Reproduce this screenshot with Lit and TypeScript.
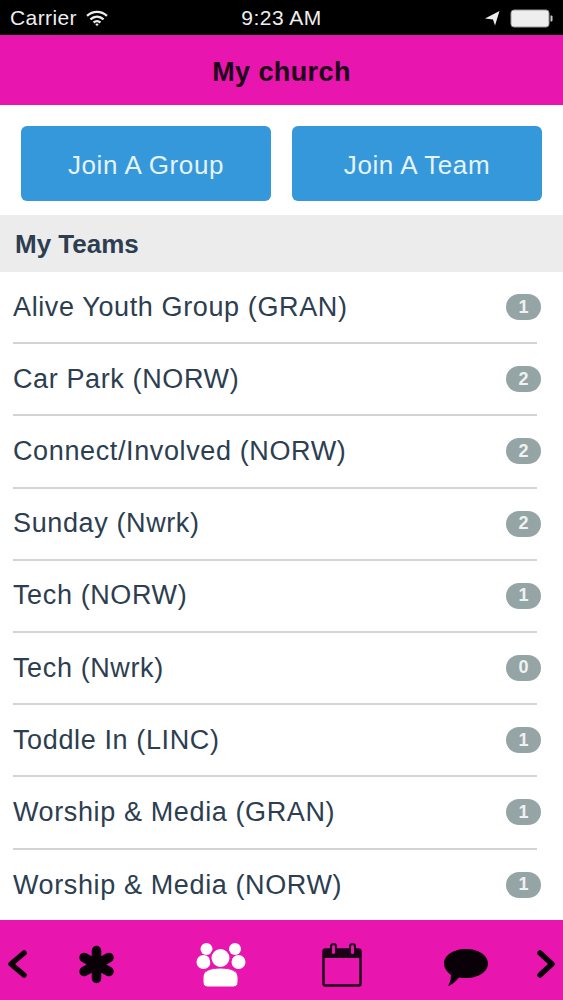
import { LitElement, html, css, svg } from "lit";
import { customElement } from "lit/decorators.js";

const teams: [string, number][] = [
  ["Alive Youth Group (GRAN)", 1],
  ["Car Park (NORW)", 2],
  ["Connect/Involved (NORW)", 2],
  ["Sunday (Nwrk)", 2],
  ["Tech (NORW)", 1],
  ["Tech (Nwrk)", 0],
  ["Toddle In (LINC)", 1],
  ["Worship & Media (GRAN)", 1],
  ["Worship & Media (NORW)", 1],
];

@customElement("app-root")
export class AppRoot extends LitElement {
  static styles = css`
    :host {
      display: flex;
      flex-direction: column;
      width: 563px;
      height: 1000px;
      overflow: hidden;
      background: #fff;
      font-family: "Liberation Sans", Arial, sans-serif;
      color: #2c3e50;
    }
    .status {
      flex: none;
      height: 35px;
      background: #000;
      color: #eee;
      display: grid;
      grid-template-columns: 1fr auto 1fr;
      align-items: center;
      font-size: 21px;
      padding: 1px 10px 0 10px;
      box-sizing: border-box;
    }
    .status .left { display: flex; align-items: center; gap: 9px; }
    .carrier { letter-spacing: 0.4px; }
    .status .right { display: flex; align-items: center; justify-content: flex-end; gap: 10px; }
    .time { letter-spacing: 0.5px; }
    .nav {
      flex: none;
      height: 70px;
      box-sizing: border-box;
      padding-top: 4px;
      background: #e815ae;
      color: #1c0018;
      display: flex;
      align-items: center;
      justify-content: center;
      font-weight: 700;
      font-size: 27px;
      letter-spacing: 0.4px;
    }
    .buttons {
      flex: none;
      height: 110px;
      box-sizing: border-box;
      padding: 21px 21px 14px;
      display: grid;
      grid-template-columns: 250px 250px;
      column-gap: 21px;
    }
    .btn {
      background: #3498db;
      color: #e6f3fb;
      border-radius: 6px;
      display: flex;
      align-items: center;
      justify-content: center;
      font-size: 26px;
      letter-spacing: 0.6px;
      box-sizing: border-box;
      padding-top: 3px;
    }
    .section {
      flex: none;
      height: 57px;
      box-sizing: border-box;
      padding-top: 2px;
      background: #ececec;
      display: flex;
      align-items: center;
      padding-left: 15px;
      font-weight: 700;
      font-size: 26px;
    }
    .list {
      flex: 1;
      min-height: 0;
      overflow: hidden;
      display: flex;
      flex-direction: column;
    }
    .row {
      flex: none;
      height: 72.2px;
      margin-left: 13px;
      margin-right: 26px;
      box-sizing: border-box;
      border-bottom: 2px solid #d4d4d4;
      position: relative;
      display: flex;
      align-items: center;
      font-size: 27px;
      letter-spacing: 0.62px;
    }
    .row:last-child { border-bottom: none; }
    .badge {
      position: absolute;
      right: -4px;
      top: 22px;
      width: 35px;
      height: 26px;
      border-radius: 13px;
      background: #95a5a6;
      color: #eef2f2;
      font-size: 18px;
      font-weight: 700;
      letter-spacing: 0;
      display: flex;
      align-items: center;
      justify-content: center;
    }
    .tabs {
      flex: none;
      height: 80px;
      background: #e815ae;
      position: relative;
    }
    .tabs svg { position: absolute; left: 0; top: 0; }
  `;

  render() {
    return html`
      <div class="status">
        <div class="left">
          <span class="carrier">Carrier</span>
          <svg width="22" height="17" viewBox="0 0 21 16">
            <path d="M1 5.500C6.500 .5 14.500 .5 20 5.500M4.200 8.800C8 5.500 13 5.500 16.800 8.800M7.200 11.800C9.200 10.200 11.800 10.200 13.800 11.800" fill="none" stroke="#eee" stroke-width="2.200"/>
            <path d="M8.800 13.200L10.500 15.500L12.200 13.200C11.200 12.500 9.800 12.500 8.800 13.200Z" fill="#eee"/>
          </svg>
        </div>
        <div class="time">9:23 AM</div>
        <div class="right">
          <svg width="16" height="16" viewBox="0 0 16 16"><path d="M1 8.500L15.500 1L11 15.500L9 9.500Z" fill="#eee"/></svg>
          <svg width="43" height="19" viewBox="0 0 43 19">
            <rect x="1" y="1" width="38" height="17" rx="3" fill="#eee" stroke="#999" stroke-width="1"/>
            <path d="M40.500 6.500h1a1 1 0 0 1 1 1v4a1 1 0 0 1-1 1h-1z" fill="#ccc"/>
          </svg>
        </div>
      </div>
      <div class="nav">My church</div>
      <div class="buttons">
        <div class="btn">Join A Group</div>
        <div class="btn">Join A Team</div>
      </div>
      <div class="section">My Teams</div>
      <div class="list">
        ${teams.map(
          ([n, c]) => html`<div class="row"><span>${n}</span><span class="badge">${c}</span></div>`
        )}
      </div>
      <div class="tabs">
        <svg width="563" height="80" viewBox="0 0 563 80">
          ${svg`
          <path d="M24 33L11 44L24 55" fill="none" stroke="#0a0008" stroke-width="5.500" stroke-linecap="round" stroke-linejoin="round"/>
          <g stroke="#0a0008" stroke-width="9.500" stroke-linecap="round">
            <path d="M96.500 30.500V58.500M84 37.500L109 51.500M109 37.500L84 51.500"/>
          </g>
          <g fill="#fff">
            <circle cx="206.500" cy="29" r="6"/>
            <circle cx="235" cy="29" r="6"/>
            <circle cx="203.500" cy="42" r="7"/>
            <circle cx="238.500" cy="42" r="7"/>
            <circle cx="220.500" cy="38" r="10" stroke="#e815ae" stroke-width="2"/>
            <path d="M203 62V57C203 51 210 48 220.500 48C231 48 238 51 238 57V62C238 65.500 236 67 233 67H208C205 67 203 65.500 203 62Z" stroke="#e815ae" stroke-width="1"/>
          </g>
          <rect x="323.500" y="29.500" width="37" height="36" rx="2" fill="none" stroke="#1c0018" stroke-width="2.500"/>
          <path d="M323 29H361V38H323Z" fill="#1c0018"/>
          <rect x="331" y="24" width="5" height="11" rx="2.500" fill="#e815ae" stroke="#1c0018" stroke-width="2"/>
          <rect x="350" y="24" width="5" height="11" rx="2.500" fill="#e815ae" stroke="#1c0018" stroke-width="2"/>
          <path d="M466 29C478 29 488 35 488 43.500C488 52 478 58 466 58C463 58 461 58 459 57.500C456 61 452 65 448 66C450 63 451 59 451 55C447 52 444 48 444 43.500C444 35 454 29 466 29Z" fill="#0a0008"/>
          <path d="M540 33L552 44L540 55" fill="none" stroke="#0a0008" stroke-width="5.500" stroke-linecap="round" stroke-linejoin="round"/>
          `}
        </svg>
      </div>
    `;
  }
}
